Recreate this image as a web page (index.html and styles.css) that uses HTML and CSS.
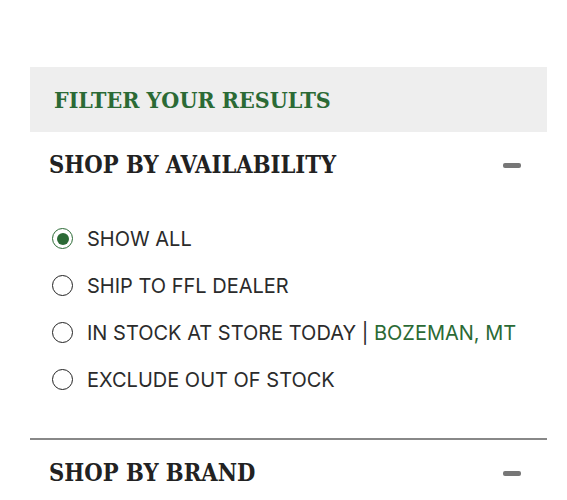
FILE: index.html
```html
<!DOCTYPE html>
<html lang="en">
<head>
    <meta charset="UTF-8">
    <meta name="viewport" content="width=device-width, initial-scale=1.0">
    <title>Filter Your Results</title>
    <link rel="stylesheet" href="styles.css">
</head>
<body>
    <div class="filters">
        <h2 class="filters-title">FILTER YOUR RESULTS</h2>

        <!-- Availability -->
        <div class="facet">
            <div class="facet-head">
                <h3>SHOP BY AVAILABILITY</h3>
                <span class="toggle"></span>
            </div>
            <ul class="options">
                <li><span class="radio checked"></span>SHOW ALL</li>
                <li><span class="radio"></span>SHIP TO FFL DEALER</li>
                <li><span class="radio"></span>IN STOCK AT STORE TODAY | <span class="store">BOZEMAN, MT</span></li>
                <li><span class="radio"></span>EXCLUDE OUT OF STOCK</li>
            </ul>
        </div>

        <!-- Brand -->
        <div class="facet">
            <div class="facet-head">
                <h3>SHOP BY BRAND</h3>
                <span class="toggle"></span>
            </div>
        </div>
    </div>
</body>
</html>
```

FILE: styles.css
```css
body {
    margin: 0;
    background: #fff;
    font-family: Inter, "Noto Sans", Arial, sans-serif;
    color: #2b2b2b;
}
.filters {
    margin: 67px 20px 0 30px;
}
.filters-title {
    margin: 0;
    height: 65px;
    padding-left: 24px;
    display: flex;
    align-items: center;
    background: #eeeeee;
    color: #2b6a35;
    font-family: "DejaVu Serif", serif;
    font-stretch: condensed;
    font-size: 23px;
    font-weight: bold;
}
.facet {
    border-bottom: 2px solid #888;
}
.facet:last-child {
    border-bottom: none;
}
.facet-head {
    display: flex;
    align-items: center;
    justify-content: space-between;
    height: 66px;
    padding: 0 26px 0 19px;
}
.facet-head h3 {
    margin: 0;
    font-family: "DejaVu Serif", serif;
    font-stretch: condensed;
    font-size: 23.5px;
    font-weight: bold;
    color: #222;
}
.toggle {
    width: 18px;
    height: 5px;
    border-radius: 2px;
    background: #777;
}
.options {
    list-style: none;
    margin: 0;
    padding: 17px 0 35px 22px;
}
.options li {
    display: flex;
    align-items: center;
    height: 47px;
    font-size: 20px;
    white-space: pre;
}
.radio {
    box-sizing: border-box;
    width: 21px;
    height: 21px;
    margin-right: 14px;
    border: 1.5px solid #222;
    border-radius: 50%;
    display: flex;
    align-items: center;
    justify-content: center;
}
.radio.checked {
    border-color: #2b6a35;
}
.radio.checked::after {
    content: "";
    width: 12px;
    height: 12px;
    border-radius: 50%;
    background: #2b6a35;
}
.store {
    color: #2b6a35;
}
```
